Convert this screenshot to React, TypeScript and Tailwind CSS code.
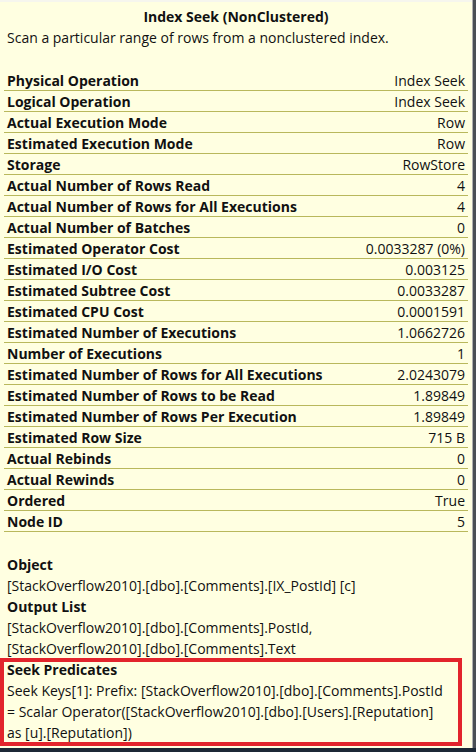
const rows: [string, string][] = [
  ["Physical Operation", "Index Seek"],
  ["Logical Operation", "Index Seek"],
  ["Actual Execution Mode", "Row"],
  ["Estimated Execution Mode", "Row"],
  ["Storage", "RowStore"],
  ["Actual Number of Rows Read", "4"],
  ["Actual Number of Rows for All Executions", "4"],
  ["Actual Number of Batches", "0"],
  ["Estimated Operator Cost", "0.0033287 (0%)"],
  ["Estimated I/O Cost", "0.003125"],
  ["Estimated Subtree Cost", "0.0033287"],
  ["Estimated CPU Cost", "0.0001591"],
  ["Estimated Number of Executions", "1.0662726"],
  ["Number of Executions", "1"],
  ["Estimated Number of Rows for All Executions", "2.0243079"],
  ["Estimated Number of Rows to be Read", "1.89849"],
  ["Estimated Number of Rows Per Execution", "1.89849"],
  ["Estimated Row Size", "715 B"],
  ["Actual Rebinds", "0"],
  ["Actual Rewinds", "0"],
  ["Ordered", "True"],
  ["Node ID", "5"],
];

function Section({ title, lines }: { title: string; lines: string[] }) {
  return (
    <div className="px-[3px]">
      <div className="font-bold">{title}</div>
      {lines.map((l) => (
        <div key={l} className="whitespace-nowrap">
          {l}
        </div>
      ))}
    </div>
  );
}

export default function App() {
  return (
    <div className="min-h-screen bg-[#1c2836]">
      <div className="flex">
        <div className="h-[748px] w-[472px] overflow-hidden border-t-2 border-[#f6f6ee] bg-[#ffffe1] px-[4px] pt-[4px] font-['Open_Sans',sans-serif] text-[14px] leading-[21px] text-[#111]">
          <div className="text-center font-bold">Index Seek (NonClustered)</div>
          <div className="px-[3px]">Scan a particular range of rows from a nonclustered index.</div>

          <div className="mt-[22px]">
            {rows.map(([label, value]) => (
              <div
                key={label}
                className="flex h-[21px] items-center justify-between border-b border-[#b9b85c] px-[3px]"
              >
                <span className="font-bold">{label}</span>
                <span>{value}</span>
              </div>
            ))}
          </div>

          <div className="mt-[22px]">
            <Section title="Object" lines={["[StackOverflow2010].[dbo].[Comments].[IX_PostId] [c]"]} />
            <Section
              title="Output List"
              lines={["[StackOverflow2010].[dbo].[Comments].PostId,", "[StackOverflow2010].[dbo].[Comments].Text"]}
            />
            <div className="relative">
              <Section
                title="Seek Predicates"
                lines={[
                  "Seek Keys[1]: Prefix: [StackOverflow2010].[dbo].[Comments].PostId",
                  "= Scalar Operator([StackOverflow2010].[dbo].[Users].[Reputation]",
                  "as [u].[Reputation])",
                ]}
              />
              {/* annotation box drawn over the section */}
              <div className="pointer-events-none absolute -top-[1px] -left-[4px] h-[88px] w-[462px] border-4 border-[#e2242c]" />
            </div>
          </div>
        </div>
        <div className="h-[748px] w-[1px] bg-[#b0b0b0]" />
        <div className="h-[748px] w-[3px] bg-[#4a4f55]" />
      </div>
    </div>
  );
}
